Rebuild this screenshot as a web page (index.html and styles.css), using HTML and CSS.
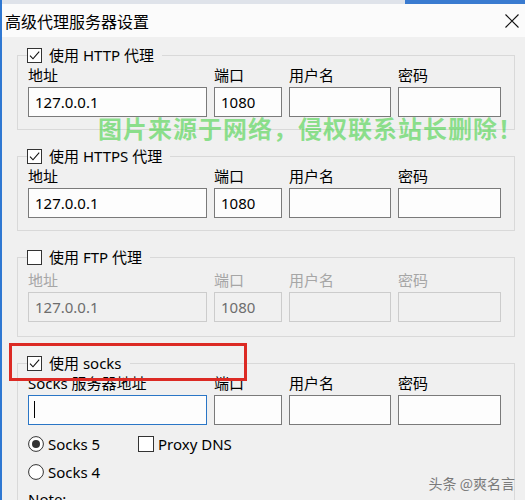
FILE: index.html
```html
<!DOCTYPE html>
<html lang="zh-CN">
<head>
<meta charset="utf-8">
<title>高级代理服务器设置</title>
<link rel="stylesheet" href="styles.css">
</head>
<body>
<div class="window">
  <div class="topstrip"></div>
  <div class="titlebar">
    <span class="title">高级代理服务器设置</span>
    <svg class="close" width="14" height="14" viewBox="0 0 14 14"><path d="M0.5 0.5 L13.5 13.5 M13.5 0.5 L0.5 13.5" stroke="#111" stroke-width="1.1" fill="none"/></svg>
  </div>
  <div class="content">
    <fieldset class="group">
      <legend>
        <svg class="box" width="15" height="15" viewBox="0 0 15 15"><rect x="0.5" y="0.5" width="14" height="14" fill="#fff" stroke="#333"/><path d="M3 7.6 L6 10.8 L12.2 3.6" fill="none" stroke="#111" stroke-width="1.1"/></svg>
        <span>使用 HTTP 代理</span>
      </legend>
      <div class="grid">
        <span class="lbl">地址</span><span class="lbl">端口</span><span class="lbl">用户名</span><span class="lbl">密码</span>
        <div class="input">127.0.0.1</div><div class="input">1080</div><div class="input"></div><div class="input"></div>
      </div>
    </fieldset>

    <fieldset class="group">
      <legend>
        <svg class="box" width="15" height="15" viewBox="0 0 15 15"><rect x="0.5" y="0.5" width="14" height="14" fill="#fff" stroke="#333"/><path d="M3 7.6 L6 10.8 L12.2 3.6" fill="none" stroke="#111" stroke-width="1.1"/></svg>
        <span>使用 HTTPS 代理</span>
      </legend>
      <div class="grid">
        <span class="lbl">地址</span><span class="lbl">端口</span><span class="lbl">用户名</span><span class="lbl">密码</span>
        <div class="input">127.0.0.1</div><div class="input">1080</div><div class="input"></div><div class="input"></div>
      </div>
    </fieldset>

    <fieldset class="group ftp">
      <legend>
        <svg class="box" width="15" height="15" viewBox="0 0 15 15"><rect x="0.5" y="0.5" width="14" height="14" fill="#fff" stroke="#333"/></svg>
        <span>使用 FTP 代理</span>
      </legend>
      <div class="grid disabled">
        <span class="lbl">地址</span><span class="lbl">端口</span><span class="lbl">用户名</span><span class="lbl">密码</span>
        <div class="input">127.0.0.1</div><div class="input">1080</div><div class="input"></div><div class="input"></div>
      </div>
    </fieldset>

    <fieldset class="group">
      <legend>
        <svg class="box" width="15" height="15" viewBox="0 0 15 15"><rect x="0.5" y="0.5" width="14" height="14" fill="#fff" stroke="#333"/><path d="M3 7.6 L6 10.8 L12.2 3.6" fill="none" stroke="#111" stroke-width="1.1"/></svg>
        <span>使用 socks</span>
      </legend>
      <div class="grid">
        <span class="lbl">Socks 服务器地址</span><span class="lbl">端口</span><span class="lbl">用户名</span><span class="lbl">密码</span>
        <div class="input focus"><span class="caret"></span></div><div class="input"></div><div class="input"></div><div class="input"></div>
      </div>
      <div class="optrow">
        <div class="opt first">
          <svg width="16" height="16" viewBox="0 0 16 16"><circle cx="8" cy="8" r="7.4" fill="#fff" stroke="#333"/><circle cx="8" cy="8" r="4" fill="#333"/></svg>
          <span>Socks 5</span>
        </div>
        <div class="opt">
          <svg width="16" height="16" viewBox="0 0 16 16"><rect x="0.5" y="0.5" width="15" height="15" fill="#fff" stroke="#333"/></svg>
          <span>Proxy DNS</span>
        </div>
      </div>
      <div class="optrow second">
        <div class="opt first">
          <svg width="16" height="16" viewBox="0 0 16 16"><circle cx="8" cy="8" r="7.4" fill="#fff" stroke="#333"/></svg>
          <span>Socks 4</span>
        </div>
      </div>
      <div class="note">Note:</div>
    </fieldset>
  </div>

  <div class="redmark"></div>
  <div class="watermark">图片来源于网络，侵权联系站长删除！</div>
  <div class="credit">头条 @爽名言</div>
</div>
</body>
</html>
```

FILE: styles.css
```css
html, body {
  margin: 0;
  padding: 0;
}
body {
  width: 525px;
  height: 500px;
  overflow: hidden;
  background: #f0f0f0;
  font-family: "Noto Sans", "Noto Sans CJK SC", sans-serif;
  font-size: 15px;
  color: #000;
}
.window {
  position: relative;
  height: 500px;
  overflow: hidden;
  border-left: 2px solid #2f78d2;
  box-sizing: border-box;
}
.topstrip {
  height: 4px;
  background: linear-gradient(to right, #dfe3ea 0, #dfe3ea 403px, #3a7bd0 403px);
  background-color: #dfe3ea;
}
.titlebar {
  height: 33px;
  background: #fbfbfb;
  display: flex;
  align-items: center;
  justify-content: space-between;
  padding: 0 6px 0 3px;
}
.title {
  font-size: 16px;
  line-height: 20px;
  font-family: "Noto Sans CJK SC", sans-serif;
}
.close {
  display: block;
  margin-top: 1px;
}
.content {
  padding: 9px 10px 0 15px;
}
.group {
  margin: 17px 0 0 0;
  padding: 1px 12px 12px 10px;
  border: 1px solid #d9d9d9;
  min-inline-size: 0;
}
.group:first-child {
  margin-top: 0;
}
.group.ftp {
  padding-top: 4px;
  padding-bottom: 14px;
}
legend {
  display: flex;
  align-items: center;
  gap: 7px;
  height: 18px;
  line-height: 18px;
  padding: 0 8px 0 0;
  margin-left: -1px;
}
legend .box {
  display: block;
}
.grid {
  display: grid;
  grid-template-columns: 179px 68px 102px 103px;
  column-gap: 7px;
  row-gap: 2px;
}
.lbl {
  line-height: 20px;
  white-space: nowrap;
}
.input {
  height: 30px;
  box-sizing: border-box;
  border: 1px solid #7a7a7a;
  background: #fdfdfd;
  padding: 0 6px;
  line-height: 28px;
  position: relative;
}
.input.focus {
  border-color: #2a76c6;
}
.caret {
  display: block;
  width: 1px;
  height: 17px;
  background: #000;
  margin-top: 5px;
  margin-left: -1px;
}
.disabled .lbl {
  color: #a6a6a6;
}
.disabled .input {
  border-color: #cccccc;
  background: #f0f0f0;
  color: #6d6d6d;
}
.optrow {
  display: flex;
  align-items: center;
  height: 20px;
  margin-top: 9px;
}
.optrow.second {
  margin-top: 8px;
}
.opt {
  display: flex;
  align-items: center;
  gap: 4px;
  line-height: 20px;
}
.opt svg {
  display: block;
}
.opt.first {
  width: 110px;
}
.note {
  margin-top: 7px;
  line-height: 20px;
}
.redmark {
  position: absolute;
  left: 7px;
  top: 343px;
  width: 238px;
  height: 38px;
  box-sizing: border-box;
  border: 3px solid #dc2a24;
}
.watermark {
  position: absolute;
  left: 96px;
  top: 114px;
  font-family: "Noto Sans CJK SC", sans-serif;
  font-weight: 700;
  font-size: 24px;
  line-height: 28px;
  letter-spacing: 1px;
  color: rgba(70, 210, 70, 0.6);
  white-space: nowrap;
}
.credit {
  position: absolute;
  right: 10px;
  top: 474px;
  font-family: "Noto Sans CJK SC", sans-serif;
  font-size: 14px;
  line-height: 18px;
  color: #7a7a7a;
}
```
